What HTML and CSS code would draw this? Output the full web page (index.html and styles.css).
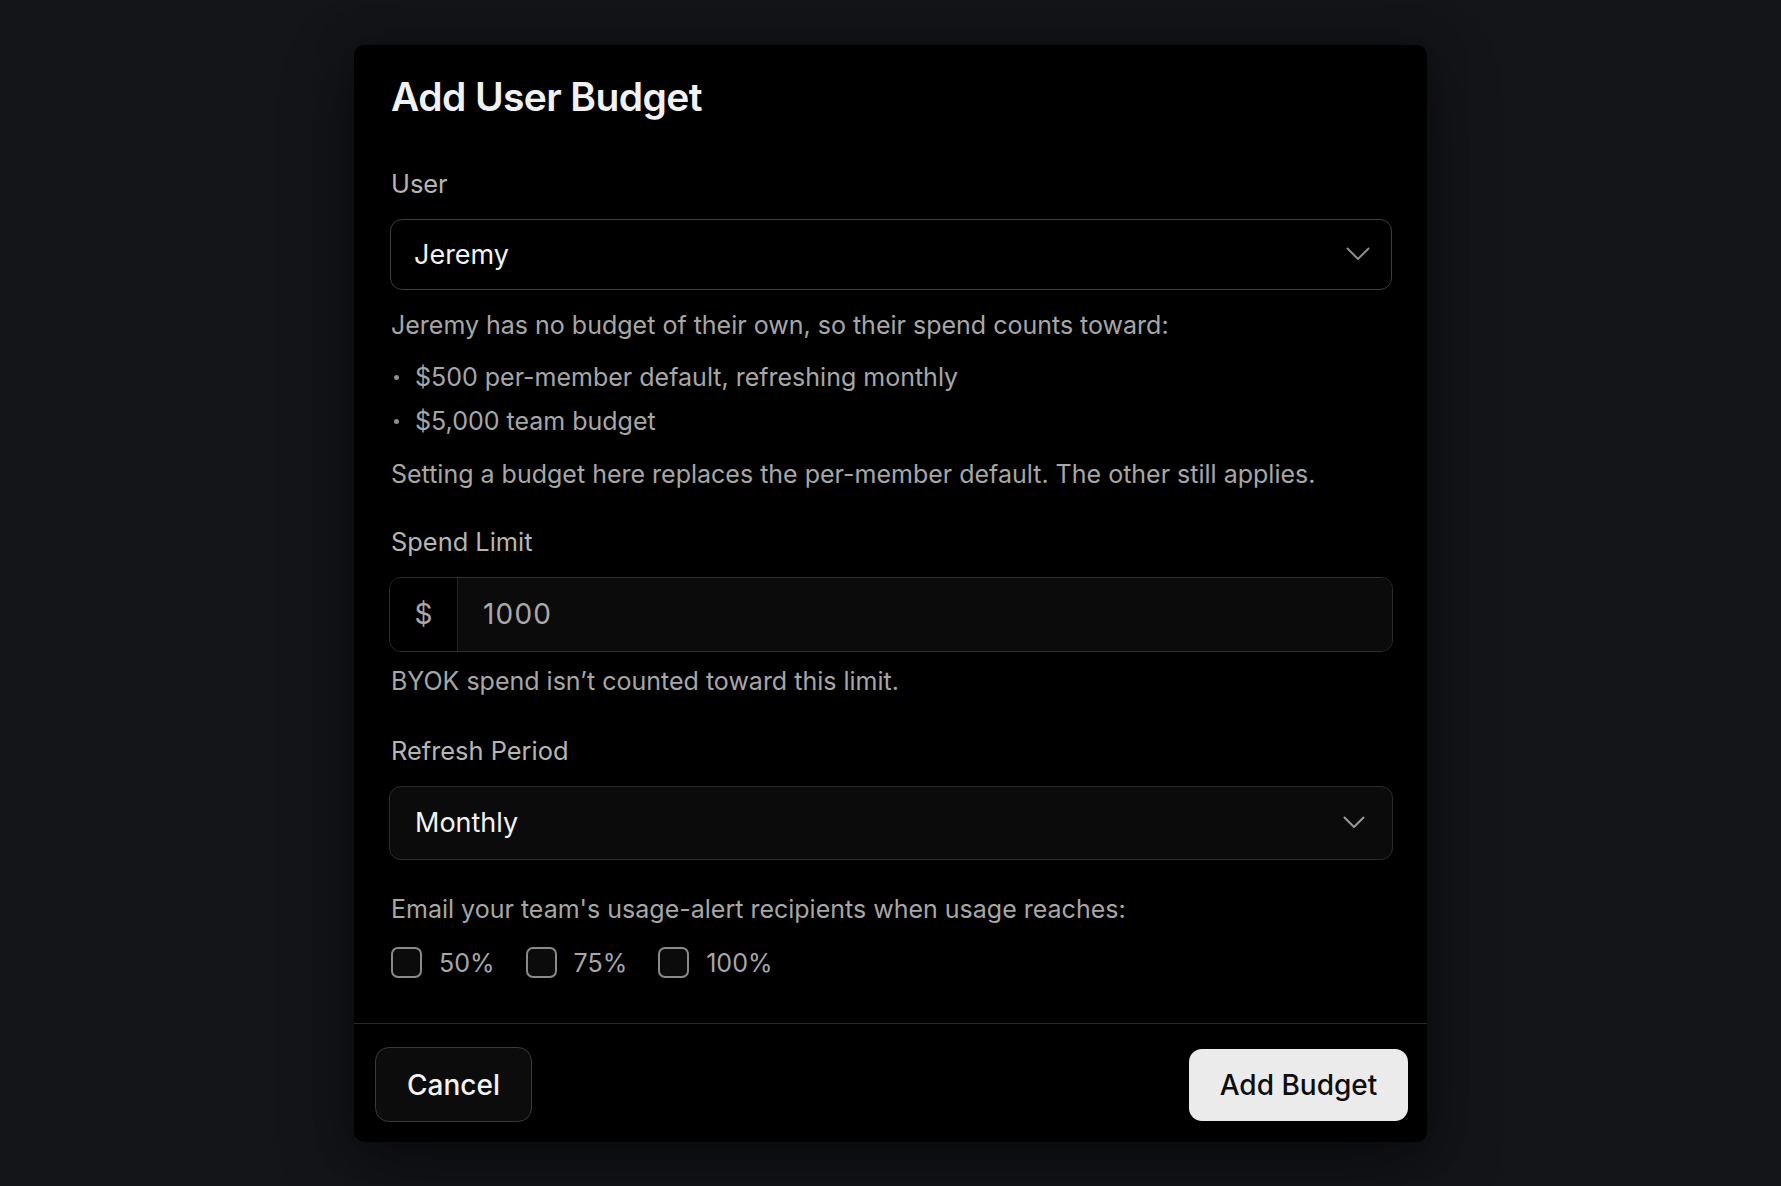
FILE: index.html
```html
<!DOCTYPE html>
<html lang="en">
<head>
<meta charset="utf-8">
<title>Add User Budget</title>
<link rel="stylesheet" href="styles.css">
</head>
<body>
<div class="modal" role="dialog" aria-labelledby="t">
  <div class="modal-body">
    <h2 class="title" id="t">Add User Budget</h2>

    <div class="field field-user">
      <div class="label">User</div>
      <div class="select select-user">
        <span class="select-value">Jeremy</span>
        <svg class="chev chev-user" width="24" height="14" viewBox="0 0 24 14"><polyline points="1.5,1.5 12,12 22.5,1.5" fill="none" stroke="#8c8c8c" stroke-width="2" stroke-linecap="round" stroke-linejoin="round"/></svg>
      </div>
      <p class="desc desc-first">Jeremy has no budget of their own, so their spend counts toward:</p>
      <ul class="bullets">
        <li><span class="dot"></span>$500 per-member default, refreshing monthly</li>
        <li><span class="dot"></span>$5,000 team budget</li>
      </ul>
      <p class="desc">Setting a budget here replaces the per-member default. The other still applies.</p>
    </div>

    <div class="field field-spend">
      <div class="label">Spend Limit</div>
      <div class="money">
        <span class="prefix">$</span>
        <span class="money-value">1000</span>
      </div>
      <p class="desc desc-hint">BYOK spend isn’t counted toward this limit.</p>
    </div>

    <div class="field field-period">
      <div class="label">Refresh Period</div>
      <div class="select select-period">
        <span class="select-value">Monthly</span>
        <svg class="chev chev-period" width="22" height="13" viewBox="0 0 22 13"><polyline points="1.5,1.5 11,11 20.5,1.5" fill="none" stroke="#9a9a9a" stroke-width="2" stroke-linecap="round" stroke-linejoin="round"/></svg>
      </div>
    </div>

    <div class="field field-alert">
      <p class="desc alert-text">Email your team's usage-alert recipients when usage reaches:</p>
      <div class="checks">
        <label class="check"><span class="box"></span><span>50%</span></label>
        <label class="check"><span class="box"></span><span>75%</span></label>
        <label class="check"><span class="box"></span><span>100%</span></label>
      </div>
    </div>
  </div>
  <div class="modal-footer">
    <button class="btn btn-cancel" type="button">Cancel</button>
    <button class="btn btn-primary" type="button">Add Budget</button>
  </div>
</div>
</body>
</html>
```
FILE: styles.css
```css
* { box-sizing: border-box; }
html, body { height: 100%; }
body {
  margin: 0;
  background: #141519;
  font-family: Inter, "Noto Sans", "Liberation Sans", sans-serif;
  display: flex;
  align-items: center;
  justify-content: center;
  min-height: 1186px;
}
.modal {
  width: 1073px;
  background: #000;
  border-radius: 10px;
  box-shadow: 0 24px 70px rgba(0, 0, 0, 0.45), 0 0 40px rgba(0, 0, 0, 0.25);
  display: flex;
  flex-direction: column;
}
.modal-body {
  padding: 28px 35px 42px 37px;
}
.title {
  margin: 0;
  font-size: 39px;
  line-height: 48px;
  font-weight: 600;
  letter-spacing: -0.6px;
  color: #f1f1f1;
}
.field { display: flex; flex-direction: column; }
.field-user { margin-top: 45px; }
.field-spend { margin-top: 32px; }
.field-period { margin-top: 34px; }
.field-alert { margin-top: 31px; }
.label {
  font-size: 25.4px;
  line-height: 36px;
  color: #b6b6b6;
  margin-bottom: 17px;
}
.select {
  height: 71px;
  border-radius: 12px;
  display: flex;
  align-items: center;
  justify-content: space-between;
  font-size: 27px;
  color: #f2f2f2;
}
.select-user {
  background: #000;
  border: 1.5px solid #3e3e3e;
  padding: 0 21px 0 23px;
  margin-left: -1px;
}
.select-period {
  height: 74px;
  background: #0b0b0b;
  border: 1.5px solid #2b2b2b;
  padding: 0 27px 0 25px;
  margin-left: -2px;
  margin-right: -1px;
}
.desc {
  margin: 0;
  font-size: 25px;
  line-height: 36px;
  color: #a7a7a7;
}
.desc-first { margin-top: 17px; }
.bullets {
  list-style: none;
  margin: 16px 0 17px;
  padding: 0;
  display: flex;
  flex-direction: column;
  gap: 8px;
}
.bullets li {
  display: flex;
  align-items: center;
  font-size: 25px;
  line-height: 36px;
  color: #a7a7a7;
}
.dot {
  width: 5px;
  height: 5px;
  border-radius: 50%;
  background: #8e8e8e;
  margin: 2px 16px 0 3px;
  flex: none;
}
.money {
  height: 75px;
  display: flex;
  border: 1.5px solid #2e2e2e;
  border-radius: 12px;
  overflow: hidden;
  margin-left: -2px;
  margin-right: -1px;
  color: #a9a9a9;
}
.prefix {
  width: 68px;
  flex: none;
  display: flex;
  align-items: center;
  justify-content: center;
  background: #000;
  border-right: 1.5px solid #222;
  font-size: 28px;
}
.money-value {
  flex: 1;
  display: flex;
  align-items: center;
  padding-left: 25px;
  background: #0b0b0b;
  font-size: 28px;
  letter-spacing: 1.2px;
}
.desc-hint { margin-top: 11px; }
.checks {
  display: flex;
  gap: 31px;
  margin-top: 18px;
}
.check {
  display: flex;
  align-items: center;
  gap: 17px;
  font-size: 25px;
  line-height: 36px;
  color: #a7a7a7;
}
.box {
  width: 31px;
  height: 31px;
  border: 2px solid #8a8a8a;
  border-radius: 7px;
  background: #0b0b0b;
  flex: none;
}
.modal-footer {
  height: 119px;
  border-top: 1px solid #2a2a2a;
  display: flex;
  align-items: center;
  justify-content: space-between;
  padding: 4px 19px 0 21px;
}
.btn {
  font-family: Inter, "Noto Sans", "Liberation Sans", sans-serif;
  font-size: 28px;
  font-weight: 500;
  cursor: pointer;
}
.btn-cancel {
  width: 157px;
  height: 75px;
  background: #0c0c0c;
  color: #f2f2f2;
  border: 1.5px solid #3a3a3a;
  border-radius: 14px;
}
.btn-primary {
  width: 219px;
  height: 72px;
  background: #ebebeb;
  color: #0d0d0d;
  border: none;
  border-radius: 13px;
}
```
